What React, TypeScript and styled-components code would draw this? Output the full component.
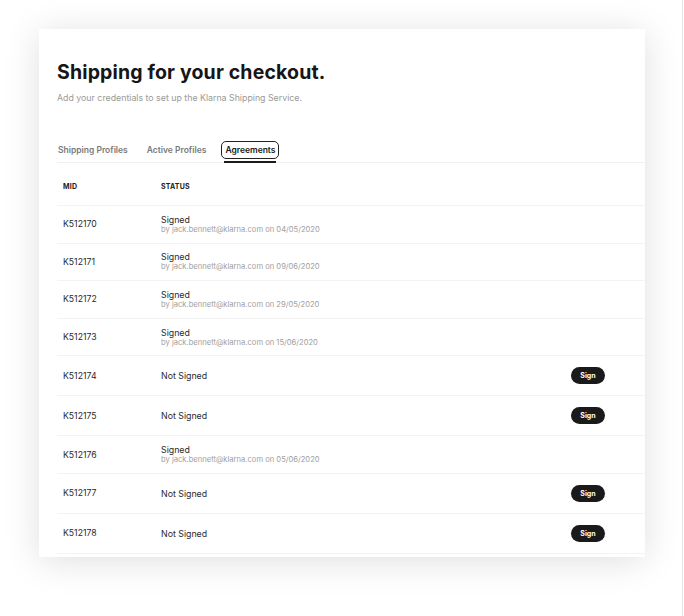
import React from "react";
import styled, { createGlobalStyle } from "styled-components";

const Global = createGlobalStyle`
  html, body { margin: 0; padding: 0; background: #ffffff; }
  body { font-family: Inter, "Noto Sans", "Liberation Sans", sans-serif; color: #1f1f1f; }
  * { box-sizing: border-box; }
`;

const Page = styled.div`
  width: 683px;
  min-height: 616px;
  border-right: 1px solid #e4e4e4;
  padding: 29px 0 0 39px;
`;

const Card = styled.section`
  width: 606px;
  background: #ffffff;
  box-shadow: 0 4px 34px rgba(0, 0, 0, 0.13);
  padding: 31px 0 3px 18px;
`;

const Title = styled.h1`
  margin: 0;
  font-size: 19.5px;
  line-height: 24px;
  font-weight: 700;
  letter-spacing: 0.15px;
  color: #161616;
`;

const Subtitle = styled.p`
  margin: 8px 0 0;
  font-size: 8.8px;
  line-height: 12px;
  color: #9a9a9a;
`;

const Tabs = styled.nav`
  margin-top: 40px;
  display: flex;
  gap: 17px;
  border-bottom: 1px solid #f0f0f0;
`;

const Tab = styled.div<{ $active?: boolean }>`
  padding-bottom: 5px;
  margin-bottom: -1px;
  border-bottom: 2px solid ${(p) => (p.$active ? "#1a1a1a" : "transparent")};
`;

const TabLabel = styled.span<{ $active?: boolean }>`
  display: block;
  font-size: 8.5px;
  line-height: 12px;
  font-weight: 600;
  color: ${(p) => (p.$active ? "#1a1a1a" : "#7a7a7a")};
  border-radius: 2px;
  outline: ${(p) => (p.$active ? "1.5px solid #222" : "none")};
  outline-offset: 2px;
  padding: 0 1px;
`;

const Row = styled.div<{ $tall?: boolean }>`
  display: flex;
  align-items: center;
  padding: ${(p) => (p.$tall ? "11px" : "7px")} 40px ${(p) => (p.$tall ? "11px" : "7px")} 6px;
  border-bottom: 1px solid #f3f3f3;
  min-height: ${(p) => (p.$tall ? "40px" : "37.6px")};
`;

const HeaderRow = styled(Row)`
  height: 43px;
  padding-top: 4px;
  padding-bottom: 0;
`;

const HeadCell = styled.div<{ $w?: number }>`
  width: ${(p) => (p.$w ? `${p.$w}px` : "auto")};
  flex: ${(p) => (p.$w ? "none" : "1")};
  font-size: 7px;
  font-weight: 700;
  letter-spacing: 0.2px;
  text-transform: uppercase;
  color: #222;
`;

const MidCell = styled.div`
  width: 98px;
  font-size: 8.7px;
  color: #2a2a2a;
`;

const StatusCell = styled.div`
  flex: 1;
  display: flex;
  flex-direction: column;
`;

const StatusText = styled.span`
  font-size: 8.8px;
  line-height: 11px;
  color: #2a2a2a;
`;

const StatusSub = styled.span`
  font-size: 7.6px;
  line-height: 10px;
  color: #a0a0a0;
`;

const SignButton = styled.button`
  width: 34px;
  height: 17px;
  border: none;
  border-radius: 9px;
  background: #1a1a1a;
  color: #ffffff;
  font-family: inherit;
  font-size: 7px;
  font-weight: 700;
  padding: 0;
  cursor: pointer;
`;

type Agreement = { mid: string; by?: string; date?: string };

const rows: Agreement[] = [
  { mid: "K512170", by: "jack.bennett@klarna.com", date: "04/05/2020" },
  { mid: "K512171", by: "jack.bennett@klarna.com", date: "09/06/2020" },
  { mid: "K512172", by: "jack.bennett@klarna.com", date: "29/05/2020" },
  { mid: "K512173", by: "jack.bennett@klarna.com", date: "15/06/2020" },
  { mid: "K512174" },
  { mid: "K512175" },
  { mid: "K512176", by: "jack.bennett@klarna.com", date: "05/06/2020" },
  { mid: "K512177" },
  { mid: "K512178" },
];

export default function App() {
  return (
    <>
      <Global />
      <Page>
        <Card>
          <Title>Shipping for your checkout.</Title>
          <Subtitle>Add your credentials to set up the Klarna Shipping Service.</Subtitle>
          <Tabs>
            <Tab>
              <TabLabel>Shipping Profiles</TabLabel>
            </Tab>
            <Tab>
              <TabLabel>Active Profiles</TabLabel>
            </Tab>
            <Tab $active>
              <TabLabel $active>Agreements</TabLabel>
            </Tab>
          </Tabs>
          <HeaderRow>
            <HeadCell $w={98}>MID</HeadCell>
            <HeadCell>Status</HeadCell>
          </HeaderRow>
          {rows.map((r) => (
            <Row key={r.mid} $tall={!r.by}>
              <MidCell>{r.mid}</MidCell>
              <StatusCell>
                {r.by ? (
                  <>
                    <StatusText>Signed</StatusText>
                    <StatusSub>
                      by {r.by} on {r.date}
                    </StatusSub>
                  </>
                ) : (
                  <StatusText>Not Signed</StatusText>
                )}
              </StatusCell>
              {!r.by && <SignButton>Sign</SignButton>}
            </Row>
          ))}
        </Card>
      </Page>
    </>
  );
}
